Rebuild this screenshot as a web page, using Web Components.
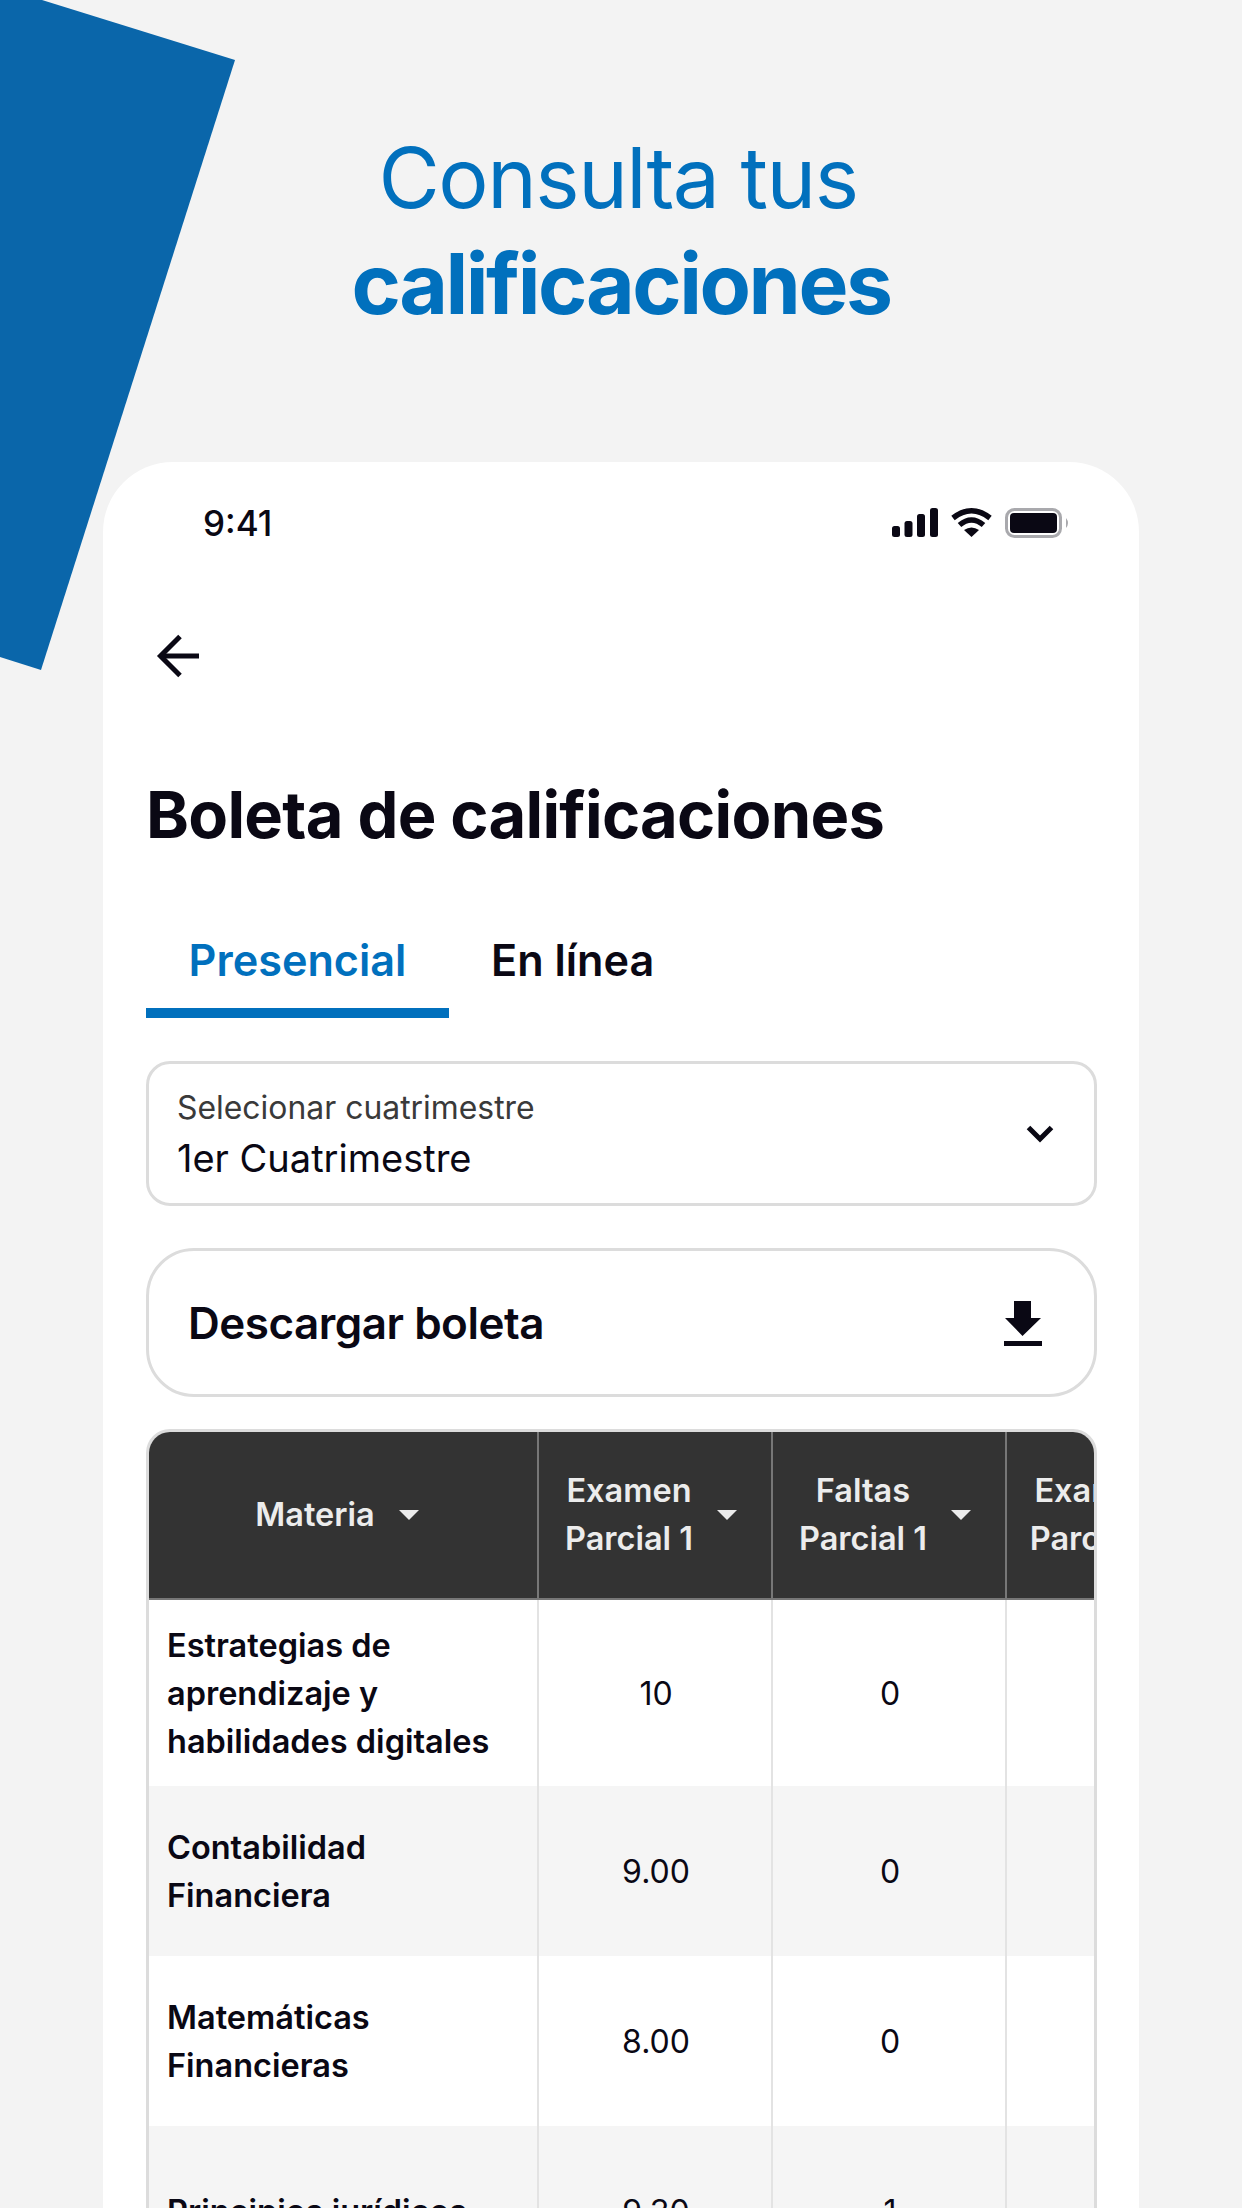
<!DOCTYPE html>
<html lang="es"><head><meta charset="utf-8"><title>Consulta tus calificaciones</title>
<style>
html,body{margin:0;padding:0;background:#f3f3f3;}
body{width:1242px;height:2208px;overflow:hidden;font-family:Inter,"Noto Sans",sans-serif;color:#0a0814;}
</style></head><body>
<promo-screen>
  <span slot="light">Consulta tus</span>
  <span slot="bold">calificaciones</span>
  <phone-card>
    <status-bar></status-bar>
    <back-arrow></back-arrow>
    <page-title>Boleta de calificaciones</page-title>
    <tab-bar></tab-bar>
    <select-box label="Selecionar cuatrimestre" value="1er Cuatrimestre"></select-box>
    <download-button>Descargar boleta</download-button>
    <grades-table></grades-table>
  </phone-card>
</promo-screen>
<script>
function def(name, css, html){
  customElements.define(name, class extends HTMLElement{
    connectedCallback(){
      if(this.shadowRoot) return;
      const r=this.attachShadow({mode:'open'});
      r.innerHTML='<style>'+css+'</style>'+(typeof html==='function'?html(this):html);
    }
  });
}
def('promo-screen',`
:host{display:block;position:relative;width:1242px;height:2208px;overflow:hidden;background:#f3f3f3;}
.deco{position:absolute;left:0;top:0;width:240px;height:680px;}
header{position:relative;display:flex;flex-direction:column;align-items:center;padding-top:125px;height:337px;color:#0170bd;font-size:84px;line-height:105px;}
header .l{letter-spacing:-1.5px;padding-right:6px;}
header .b{font-weight:700;letter-spacing:-2.450px;margin-top:1px;}
.wrap{position:relative;padding-left:103px;}
`,`<svg class="deco" viewBox="0 0 240 680"><polygon points="42,0 235,60 41,670 0,657 0,0" fill="#0a66aa"/></svg>
<header><div class="l"><slot name="light"></slot></div><div class="b"><slot name="bold"></slot></div></header>
<div class="wrap"><slot></slot></div>`);
def('phone-card',`
:host{display:block;width:1036px;height:1800px;background:#fff;border-radius:70px 70px 0 0;overflow:hidden;}
`,`<slot></slot>`);
def('status-bar',`
:host{display:flex;justify-content:space-between;align-items:center;height:86px;padding:0 69px 0 100px;margin-top:18px;box-sizing:border-box;font-size:35px;font-weight:500;}
svg{display:block;}
`,`<span>9:41</span>
<svg width="178" height="32" viewBox="0 0 178 32">
 <g fill="#0a0814"><rect x="0" y="19" width="8" height="11" rx="2.500"/><rect x="12.500" y="14" width="8" height="16" rx="2.500"/><rect x="25" y="7" width="8" height="23" rx="2.500"/><rect x="38" y="1" width="8" height="29" rx="2.500"/></g>
 <g fill="none" stroke="#0a0814" stroke-width="5.500"><path d="M61 11 Q79.500 -3.500 98 11"/><path d="M67.500 18 Q79.500 8 91.500 18"/></g>
 <path d="M72 23 Q79.500 18 87 23 L79.500 30Z" fill="#0a0814"/>
 <rect x="114.500" y="2.500" width="54" height="27" rx="8" fill="none" stroke="#a9a9ad" stroke-width="3"/>
 <rect x="118" y="6" width="47" height="20" rx="4" fill="#0a0814"/>
 <path d="M174 11 Q178 16 174 21Z" fill="#a9a9ad"/>
</svg>`);
def('back-arrow',`
:host{display:block;padding:67px 0 0 51px;height:137px;box-sizing:border-box;}
svg{display:block;}
`,`<svg width="48" height="46" viewBox="0 0 48 46" fill="none" stroke="#0a0814" stroke-width="5"><path d="M45 23H8"/><path d="M26 3.500 6.500 23 26 42.500"/></svg>`);
def('page-title',`
:host{display:block;padding:72px 0 0 43px;font-size:65px;font-weight:700;line-height:80px;letter-spacing:-.72px;}
`,`<slot></slot>`);
def('tab-bar',`
:host{display:flex;margin:61px 0 0 43px;height:102px;font-size:43.200px;font-weight:600;}
.t{padding:12px 42px 0;display:flex;align-items:flex-start;line-height:64px;box-sizing:border-box;}
.a{color:#0170bd;border-bottom:10px solid #0170bd;width:303px;justify-content:center;padding-left:0;padding-right:0;}
`,`<div class="t a">Presencial</div><div class="t">En línea</div>`);
def('select-box',`
:host{display:flex;align-items:center;justify-content:space-between;margin:43px 42px 0 43px;height:145px;box-sizing:border-box;border:3px solid #dcdcdc;border-radius:24px;padding:0 40px 0 28px;}
.txt{padding-top:2px;}
.l{font-size:31.900px;line-height:44px;color:#3a3a3a;}
.v{font-size:38px;line-height:52px;margin-top:2px;}
svg{display:block;}
`,h=>`<div class="txt"><div class="l">${h.getAttribute('label')}</div><div class="v">${h.getAttribute('value')}</div></div>
<svg width="28" height="18" viewBox="0 0 28 18" fill="none" stroke="#0a0814" stroke-width="5"><path d="M2.500 2.500 14 14 25.500 2.500"/></svg>`);
def('download-button',`
:host{display:flex;align-items:center;justify-content:space-between;margin:42px 42px 0 43px;height:149px;box-sizing:border-box;border:3px solid #dcdcdc;border-radius:48px;padding:0 52px 0 39px;font-size:44px;font-weight:600;letter-spacing:-.5px;}
svg{display:block;}
`,`<span><slot></slot></span><svg width="38" height="46" viewBox="0 0 38 46" fill="#0a0814"><path d="M10 1h17v17h10L18.500 36 1 18h9z"/><rect y="41" width="38" height="5"/></svg>`);
def('grades-table',`
:host{display:block;margin:32px 42px 0 43px;box-sizing:border-box;border:3px solid #dcdcdc;border-bottom:0;border-radius:24px 24px 0 0;overflow:hidden;}
.g{display:grid;grid-template-columns:390px 234px 234px 234px;grid-auto-rows:auto;width:1092px;}
.c{display:flex;align-items:center;justify-content:center;box-sizing:border-box;border-right:2.500px solid #e3e3e3;font-size:32px;padding-left:2px;}
.h{height:168px;background:#333;color:#ececec;border-right-color:#777;font-size:32.500px;font-weight:600;line-height:48px;text-align:center;gap:24px;border-bottom:2px solid #777;padding-left:0;padding-right:8px;}
.h.f{padding-right:12px;}
.ar{width:0;height:0;border-left:10px solid transparent;border-right:10px solid transparent;border-top:10px solid #ececec;flex:none;}
.m{justify-content:flex-start;padding:2px 10px 0 18px;font-size:32.500px;font-weight:600;line-height:48px;}
.alt{background:#f5f5f5;}
.r1{height:186px}.r2{height:170px}
`,()=>{
 const rows=[['Estrategias de<br>aprendizaje y<br>habilidades digitales','10','0','r1',''],['Contabilidad<br>Financiera','9.00','0','r2','alt'],['Matemáticas<br>Financieras','8.00','0','r2',''],['Principios jurídicos','9.30','1','r2','alt']];
 let s='<div class="g">';
 s+='<div class="c h f"><span>Materia</span><i class="ar"></i></div>';
 s+='<div class="c h"><span>Examen<br>Parcial 1</span><i class="ar"></i></div>';
 s+='<div class="c h"><span>Faltas<br>Parcial 1</span><i class="ar"></i></div>';
 s+='<div class="c h"><span>Examen<br>Parcial 2</span><i class="ar"></i></div>';
 for(const r of rows){
  s+=`<div class="c m ${r[3]} ${r[4]}"><span>${r[0]}</span></div><div class="c ${r[3]} ${r[4]}">${r[1]}</div><div class="c ${r[3]} ${r[4]}">${r[2]}</div><div class="c ${r[3]} ${r[4]}"></div>`;
 }
 return s+'</div>';
});
</script>
</body></html>
